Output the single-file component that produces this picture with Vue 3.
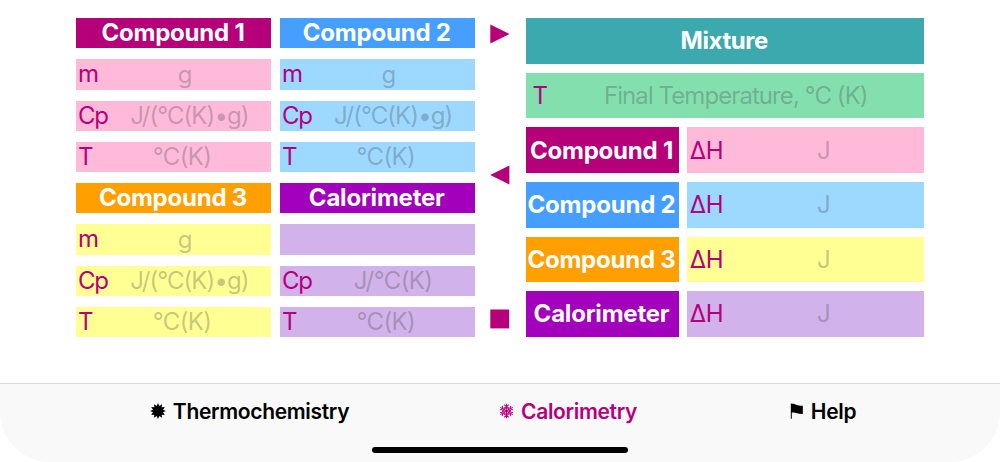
<script setup>
const cards = [
  { title: 'Compound 1', tone: 'pink', rows: [['m', 'g'], ['Cp', 'J/(°C(K)•g)'], ['T', '°C(K)']] },
  { title: 'Compound 2', tone: 'blue', rows: [['m', 'g'], ['Cp', 'J/(°C(K)•g)'], ['T', '°C(K)']] },
  { title: 'Compound 3', tone: 'orange', rows: [['m', 'g'], ['Cp', 'J/(°C(K)•g)'], ['T', '°C(K)']] },
  { title: 'Calorimeter', tone: 'purple', rows: [['', ''], ['Cp', 'J/°C(K)'], ['T', '°C(K)']] },
]

const points = (n, outer, inner) =>
  Array.from({ length: n * 2 }, (_, i) => {
    const r = i % 2 ? inner : outer
    const a = (Math.PI * i) / n - Math.PI / 2
    return `${(8 + r * Math.cos(a)).toFixed(2)},${(8 + r * Math.sin(a)).toFixed(2)}`
  }).join(' ')
const burst = points(12, 7.9, 5.2)
</script>

<template>
  <div class="screen">
    <main class="content">
      <section class="inputs">
        <div v-for="c in cards" :key="c.title" class="card" :class="c.tone">
          <div class="head">{{ c.title }}</div>
          <div v-for="(r, i) in c.rows" :key="i" class="field">
            <span class="label" :class="{ wide: r[0] === 'Cp' }">{{ r[0] }}</span>
            <span class="hint" :class="{ tight: r[1].length > 8 }">{{ r[1] }}</span>
          </div>
        </div>
      </section>

      <nav class="actions">
        <svg width="20" height="20" viewBox="0 0 20 20"><path d="M.3.4V19.6L19.6 10z" /></svg>
        <svg class="back" width="20" height="20" viewBox="0 0 20 20"><path d="M19.4.4V19.6L.2 10z" /></svg>
        <svg width="20" height="20" viewBox="0 0 20 20"><path d="M.3.5H19.2V19.4H.3z" /></svg>
      </nav>

      <section class="results">
        <div class="head mixture">Mixture</div>
        <div class="field final">
          <span class="label">T</span>
          <span class="hint tight">Final Temperature, °C (K)</span>
        </div>
        <div v-for="c in cards" :key="c.title" class="result" :class="c.tone">
          <div class="head">{{ c.title }}</div>
          <div class="field">
            <span class="label">ΔH</span>
            <span class="hint">J</span>
          </div>
        </div>
      </section>
    </main>

    <footer class="tabs">
      <div class="tab">
        <svg width="16" height="16" viewBox="0 0 16 16"><polygon :points="burst" /></svg>
        <span>Thermochemistry</span>
      </div>
      <div class="tab active">
        <svg class="flake" width="16" height="16" viewBox="0 0 16 16">
          <g v-for="k in 6" :key="k" :transform="`rotate(${k * 60} 8 8)`">
            <path d="M8 8V.3M5.6 1.3L8 3.6L10.4 1.3M5.9 3.7L8 5.8L10.1 3.7" />
          </g>
        </svg>
        <span>Calorimetry</span>
      </div>
      <div class="tab help">
        <svg width="14" height="16" viewBox="0 0 14 16">
          <path d="M.8.4H1.8V1C4 0 6 2.8 12.8 2.8V11C7 11.2 4.5 8.4 1.8 9.8V15.8H.8z" />
        </svg>
        <span>Help</span>
      </div>
      <div class="home"></div>
    </footer>
  </div>
</template>

<style>
body {
  background: #fff;
}
</style>

<style scoped>
.screen {
  width: 1000px;
  height: 462px;
  display: flex;
  flex-direction: column;
  overflow: hidden;
  font-family: Inter, "Liberation Sans", sans-serif;
  font-size: 24px;
  background: #fff;
}
.content {
  flex: 1;
  display: flex;
  padding: 18px 76px 46px;
}
.inputs {
  width: 398.5px;
  display: grid;
  grid-template-columns: 195px 194.5px;
  column-gap: 9px;
  row-gap: 11px;
}
.card {
  display: grid;
  grid-template-rows: repeat(4, 30.25px);
  row-gap: 11px;
}
.head {
  display: flex;
  align-items: center;
  justify-content: center;
  padding-right: 1px;
  white-space: nowrap;
  color: #fff;
  font-weight: 700;
  font-size: 24px;
  line-height: 30px;
  letter-spacing: -0.22px;
}
.field {
  display: flex;
  align-items: center;
  min-width: 0;
  padding-left: 2px;
  line-height: 30px;
  white-space: nowrap;
}
.label {
  color: #b5007c;
  letter-spacing: -0.3px;
}
.label.wide {
  letter-spacing: -1.2px;
}
.hint {
  flex: 1;
  padding-top: 1px;
  text-align: center;
  letter-spacing: -0.6px;
  color: rgba(60, 60, 67, 0.3);
}
.hint.tight {
  letter-spacing: -0.93px;
}
.pink .head { background: #b5007a; }
.pink .field { background: #ffbada; }
.blue .head { background: #469fff; }
.blue .field { background: #9cd8ff; }
.orange .head { background: #ffa000; }
.orange .field { background: #ffff94; }
.purple .head { background: #a200bc; }
.purple .field { background: #d1b2ea; }
.actions {
  width: 51px;
  display: flex;
  flex-direction: column;
  align-items: center;
  justify-content: space-between;
  padding: 6px 0 8px;
  box-sizing: border-box;
  fill: #b5007a;
}
.back {
  margin-bottom: 3px;
}
.results {
  flex: 1;
  display: grid;
  grid-template-rows: repeat(6, 45.7px);
  row-gap: 8.95px;
}
.results .head,
.results .field {
  padding-top: 1px;
}
.results .hint {
  padding-top: 0;
}
.result {
  display: grid;
  grid-template-columns: 153px 1fr;
  column-gap: 8.7px;
}
.result .field {
  padding-left: 2.5px;
}
.head.mixture {
  background: #3ba9ae;
  letter-spacing: -0.4px;
}
.final {
  background: #84dfaf;
  padding-left: 7px;
}
.tabs {
  height: 79px;
  box-sizing: border-box;
  position: relative;
  border-top: 1px solid #dadada;
  border-radius: 0 0 50px 50px;
  background: #f9f9f9;
  display: grid;
  grid-template-columns: 499px 138px 363px;
  font-size: 21px;
  font-weight: 600;
  letter-spacing: -0.33px;
}
.tab {
  display: flex;
  height: 56px;
  align-items: center;
  justify-content: center;
  gap: 7px;
  line-height: 26px;
}
.tab svg {
  margin-bottom: 2px;
}
.active {
  color: #b5007c;
}
.help {
  padding-left: 9px;
}
.flake {
  fill: none;
  stroke: #b5007c;
  stroke-width: 1.1;
}
.home {
  position: absolute;
  left: 372px;
  top: 63px;
  width: 256px;
  height: 6px;
  border-radius: 3px;
  background: #000;
}
</style>
